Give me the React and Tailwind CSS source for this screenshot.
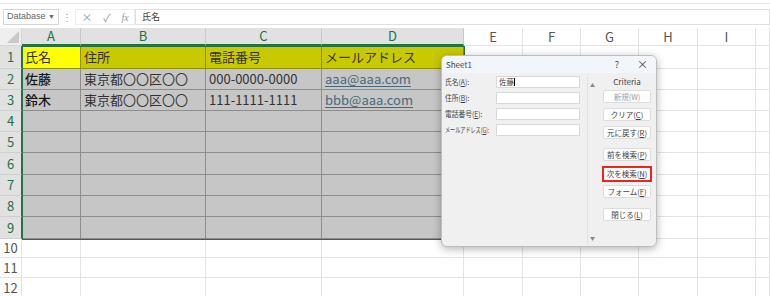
import React from 'react';

const JP = { fontFamily: '"Noto Sans CJK JP", "Noto Sans", sans-serif' };

const colLabels = ['A', 'B', 'C', 'D', 'E', 'F', 'G', 'H', 'I', ''];

const data = [
  ['氏名', '住所', '電話番号', 'メールアドレス'],
  ['佐藤', '東京都〇〇区〇〇', '000-0000-0000', 'aaa@aaa.com'],
  ['鈴木', '東京都〇〇区〇〇', '111-1111-1111', 'bbb@aaa.com'],
];

const rowNums = [1, 2, 3, 4, 5, 6, 7, 8, 9, 10, 11, 12];

// セル1つ分の背景・罫線
const cellClass = (r, c) => {
  const selected = r <= 9 && c < 4;
  if (!selected) return 'bg-white border-r border-b border-[#e3e3e3]';
  if (r === 1 && c === 0) return 'bg-[#ffff00] border-r border-b border-[#8e8e00]';
  if (r === 1) return 'bg-[#c9c900] border-r border-b border-[#8e8e00]';
  return 'bg-[#c6c6c6] border-r border-b border-[#8d8d8d]';
};

const Cell = ({ r, c }) => {
  const text = r <= 3 && c < 4 ? data[r - 1][c] : '';
  const isMail = c === 3 && r > 1 && r <= 3;
  return (
    <div className={`flex items-center pl-[3px] overflow-hidden whitespace-nowrap text-[13px] ${cellClass(r, c)}`}>
      {isMail ? (
        <span className="text-[#46697f] underline underline-offset-2">{text}</span>
      ) : (
        <span className={c === 0 && r > 1 ? 'text-[#1a1a1a] font-medium' : 'text-[#333]'}>{text}</span>
      )}
    </div>
  );
};

const Sheet = () => (
  <div className="relative grid grid-cols-[22px_59px_125px_116px_142px_59px_58px_58px_59px_58px_1fr] grid-rows-[18px_23px_21px_21px_21px_21px_22px_21px_21px_22px_19px_20px_20px]">
    {/* 左上の角 */}
    <div className="relative bg-[#efefef] border-r border-b border-[#d6d6d6] overflow-hidden">
      <div className="absolute right-[2px] bottom-[2px] w-0 h-0 border-l-[12px] border-l-transparent border-b-[12px] border-b-[#c9c9c9]" />
    </div>
    {colLabels.map((l, i) =>
      i < 4 ? (
        <div key={l} className="flex items-center justify-center bg-[#e1e1e1] border-r border-[#c9c9c9] border-b-2 border-b-[#217346] text-[13px] text-[#217346]">
          {l}
        </div>
      ) : (
        <div key={i} className="flex items-center justify-center bg-white border-r border-b border-[#e3e3e3] text-[13px] text-[#555]">
          {l}
        </div>
      )
    )}

    {rowNums.map((r) => (
      <React.Fragment key={r}>
        {r <= 9 ? (
          <div className="flex items-center justify-center bg-[#e1e1e1] border-b border-[#cfcfcf] border-r border-r-[#217346] text-[13px] text-[#217346]">
            {r}
          </div>
        ) : (
          <div className="flex items-center justify-center bg-white border-r border-b border-[#e3e3e3] text-[13px] text-[#555]">
            {r}
          </div>
        )}
        {colLabels.map((_, c) => (
          <Cell key={c} r={r} c={c} />
        ))}
      </React.Fragment>
    ))}

    {/* 選択範囲の枠 */}
    <div className="absolute left-[22px] top-[18px] w-[443px] h-[194px] border border-[#217346] pointer-events-none" />
  </div>
);

const FormBtn = ({ children, disabled }) => (
  <div className={`h-[13px] w-[48px] flex items-center justify-center bg-[#fdfdfd] border border-[#dcdcdc] rounded-[2px] text-[7.5px] ${disabled ? 'text-[#a0a0a0]' : 'text-[#444]'}`}>
    {children}
  </div>
);

const Key = ({ children }) => <span className="underline">{children}</span>;

const fields = [
  ['氏名(', 'A', '):', '佐藤'],
  ['住所(', 'B', '):', ''],
  ['電話番号(', 'E', '):', ''],
  ['メールアドレス(', 'G', '):', ''],
];

const DataForm = () => (
  <div className="absolute left-[441px] top-[55px] w-[216px] h-[192px] flex flex-col bg-[#f0f0f0] border border-[#bdbdbd] rounded-[6px] shadow-[0_2px_8px_rgba(0,0,0,0.3)] overflow-hidden text-[#444]">
    <div className="h-[17px] flex items-center bg-[#f2f5fa] pl-[4px] pr-[8px] text-[8px]">
      <span>Sheet1</span>
      <span className="ml-auto mr-[18px] text-[9px]">?</span>
      <span className="text-[11px] leading-none">×</span>
    </div>
    <div className="flex flex-1">
      <div className="w-[145px] pt-[3px] pl-[3px] flex flex-col gap-[4px]">
        {fields.map(([a, k, b, v]) => (
          <div key={k} className="h-[12px] flex items-center">
            <div className="w-[51px] shrink-0 overflow-visible text-[7.5px] whitespace-nowrap">
              <span className={k === 'G' ? 'inline-block origin-left scale-x-[0.68]' : 'inline-block origin-left scale-x-[0.9]'}>
                {a}
                <Key>{k}</Key>
                {b}
              </span>
            </div>
            <div className="h-[12px] w-[84px] shrink-0 bg-white border border-[#d9d9d9] flex items-center pl-[2px] text-[7.5px]">
              {v}
              {v && <span className="w-px h-[8px] bg-black" />}
            </div>
          </div>
        ))}
      </div>
      <div className="w-[10px] mt-[3px] mb-[2px] border-l border-[#e2e2e2] flex flex-col items-center justify-between text-[5px] text-[#888] pt-[5px] pb-[3px]">
        <span>▲</span>
        <span>▼</span>
      </div>
      <div className="flex flex-col items-start pl-[6px]">
        <div className="h-[17px] w-[48px] flex items-center justify-center text-[8px]">Criteria</div>
        <FormBtn disabled>新規(W)</FormBtn>
        <div className="mt-[5px]">
          <FormBtn>
            クリア(<Key>C</Key>)
          </FormBtn>
        </div>
        <div className="mt-[5px]">
          <FormBtn>
            元に戻す(<Key>R</Key>)
          </FormBtn>
        </div>
        <div className="mt-[9px]">
          <FormBtn>
            前を検索(<Key>P</Key>)
          </FormBtn>
        </div>
        <div className="mt-[5px] -ml-[1px] border-2 border-[#e8261c] w-[50px] h-[16px] flex items-center justify-center bg-[#fdfdfd] text-[7.5px]">
          次を検索(<Key>N</Key>)
        </div>
        <div className="mt-[3px]">
          <FormBtn>
            フォーム(<Key>F</Key>)
          </FormBtn>
        </div>
        <div className="mt-[10px]">
          <FormBtn>
            閉じる(<Key>L</Key>)
          </FormBtn>
        </div>
      </div>
    </div>
  </div>
);

const FormulaBar = () => (
  <div className="h-[23px] flex items-center pl-[3px] pt-[3px] text-[#999]">
    <div className="h-[16px] w-[56px] flex items-center justify-between border border-[#d6d6d6] px-[3px] text-[9px] text-[#666]" style={{ fontFamily: '"Liberation Sans", sans-serif' }}>
      <span>Database</span>
      <span className="text-[7px]">▼</span>
    </div>
    <span className="w-[16px] text-center text-[10px] leading-none">⋮</span>
    <div className="h-[16px] w-[60px] flex items-center justify-around border border-[#ececec] text-[11px]">
      <span>×</span>
      <span>✓</span>
      <span className="italic text-[10px]" style={{ fontFamily: '"Liberation Serif", serif' }}>fx</span>
    </div>
    <div className="h-[16px] flex-1 flex items-center border border-[#e0e0e0] pl-[6px] text-[9px] text-[#444]">氏名</div>
  </div>
);

export default function App() {
  return (
    <div className="relative w-[770px] h-[296px] overflow-hidden bg-white" style={JP}>
      <div className="h-[4px] border-b border-[#e6e6e6]" />
      <FormulaBar />
      <div className="h-[1px]" />
      <Sheet />
      <DataForm />
    </div>
  );
}
